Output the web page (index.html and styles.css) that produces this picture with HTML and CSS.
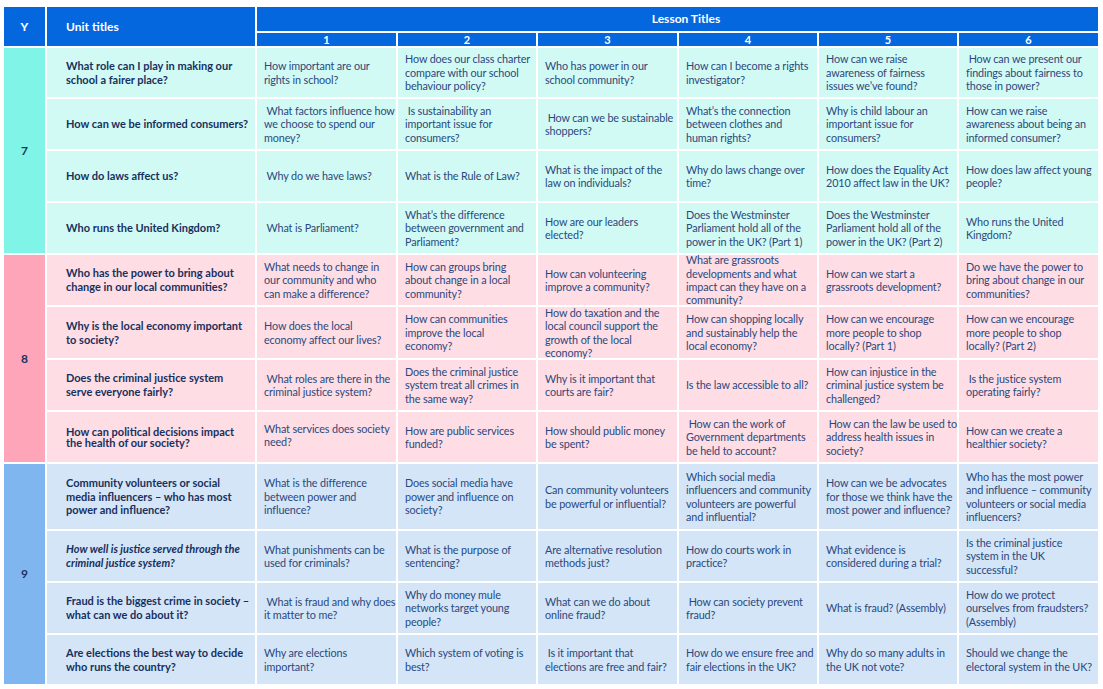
FILE: index.html
```html
<!DOCTYPE html>
<html lang="en">
<head>
<meta charset="utf-8">
<title>Curriculum overview</title>
<link rel="stylesheet" href="styles.css">
</head>
<body>
<div class="grid">
  <div class="hd hd-y"><span>Y</span></div>
  <div class="hd hd-unit"><span>Unit titles</span></div>
  <div class="hd hd-lessons"><span>Lesson Titles</span></div>
  <div class="hd num"><span>1</span></div>
  <div class="hd num"><span>2</span></div>
  <div class="hd num"><span>3</span></div>
  <div class="hd num"><span>4</span></div>
  <div class="hd num"><span>5</span></div>
  <div class="hd num"><span>6</span></div>

  <!-- Year 7 -->
  <div class="yr y7"><span>7</span></div>
  <div class="unit y7r"><span>What role can I play in making our<br>school a fairer place?</span></div>
  <div class="c y7r"><span>How important are our<br>rights in school?</span></div>
  <div class="c y7r"><span>How does our class charter<br>compare with our school<br>behaviour policy?</span></div>
  <div class="c y7r"><span>Who has power in our<br>school community?</span></div>
  <div class="c y7r"><span>How can I become a rights<br>investigator?</span></div>
  <div class="c y7r"><span>How can we raise<br>awareness of fairness<br>issues we’ve found?</span></div>
  <div class="c y7r"><span>&nbsp;How can we present our<br>findings about fairness to<br>those in power?</span></div>

  <div class="unit y7r"><span>How can we be informed consumers?</span></div>
  <div class="c y7r"><span>&nbsp;What factors influence how<br>we choose to spend our<br>money?</span></div>
  <div class="c y7r"><span>&nbsp;Is sustainability an<br>important issue for<br>consumers?</span></div>
  <div class="c y7r"><span>&nbsp;How can we be sustainable<br>shoppers?</span></div>
  <div class="c y7r"><span>What’s the connection<br>between clothes and<br>human rights?</span></div>
  <div class="c y7r"><span>Why is child labour an<br>important issue for<br>consumers?</span></div>
  <div class="c y7r"><span>How can we raise<br>awareness about being an<br>informed consumer?</span></div>

  <div class="unit y7r"><span>How do laws affect us?</span></div>
  <div class="c y7r"><span>&nbsp;Why do we have laws?</span></div>
  <div class="c y7r"><span>What is the Rule of Law?</span></div>
  <div class="c y7r"><span>What is the impact of the<br>law on individuals?</span></div>
  <div class="c y7r"><span>Why do laws change over<br>time?</span></div>
  <div class="c y7r"><span>How does the Equality Act<br>2010 affect law in the UK?</span></div>
  <div class="c y7r"><span>How does law affect young<br>people?</span></div>

  <div class="unit y7r"><span>Who runs the United Kingdom?</span></div>
  <div class="c y7r"><span>&nbsp;What is Parliament?</span></div>
  <div class="c y7r"><span>What’s the difference<br>between government and<br>Parliament?</span></div>
  <div class="c y7r"><span>How are our leaders<br>elected?</span></div>
  <div class="c y7r"><span>Does the Westminster<br>Parliament hold all of the<br>power in the UK? (Part 1)</span></div>
  <div class="c y7r"><span>Does the Westminster<br>Parliament hold all of the<br>power in the UK? (Part 2)</span></div>
  <div class="c y7r"><span>Who runs the United<br>Kingdom?</span></div>

  <!-- Year 8 -->
  <div class="yr y8"><span>8</span></div>
  <div class="unit y8r"><span>Who has the power to bring about<br>change in our local communities?</span></div>
  <div class="c y8r"><span>What needs to change in<br>our community and who<br>can make a difference?</span></div>
  <div class="c y8r"><span>How can groups bring<br>about change in a local<br>community?</span></div>
  <div class="c y8r"><span>How can volunteering<br>improve a community?</span></div>
  <div class="c y8r"><span>What are grassroots<br>developments and what<br>impact can they have on a<br>community?</span></div>
  <div class="c y8r"><span>How can we start a<br>grassroots development?</span></div>
  <div class="c y8r"><span>Do we have the power to<br>bring about change in our<br>communities?</span></div>

  <div class="unit y8r"><span>Why is the local economy important<br>to society?</span></div>
  <div class="c y8r"><span>How does the local<br>economy affect our lives?</span></div>
  <div class="c y8r"><span>How can communities<br>improve the local<br>economy?</span></div>
  <div class="c y8r"><span>How do taxation and the<br>local council support the<br>growth of the local<br>economy?</span></div>
  <div class="c y8r"><span>How can shopping locally<br>and sustainably help the<br>local economy?</span></div>
  <div class="c y8r"><span>How can we encourage<br>more people to shop<br>locally? (Part 1)</span></div>
  <div class="c y8r"><span>How can we encourage<br>more people to shop<br>locally? (Part 2)</span></div>

  <div class="unit y8r"><span>Does the criminal justice system<br>serve everyone fairly?</span></div>
  <div class="c y8r"><span>&nbsp;What roles are there in the<br>criminal justice system?</span></div>
  <div class="c y8r"><span>Does the criminal justice<br>system treat all crimes in<br>the same way?</span></div>
  <div class="c y8r"><span>Why is it important that<br>courts are fair?</span></div>
  <div class="c y8r"><span>Is the law accessible to all?</span></div>
  <div class="c y8r"><span>How can injustice in the<br>criminal justice system be<br>challenged?</span></div>
  <div class="c y8r"><span>&nbsp;Is the justice system<br>operating fairly?</span></div>

  <div class="unit y8r tight"><span>How can political decisions impact<br>the health of our society?</span></div>
  <div class="c y8r up"><span>What services does society<br>need?</span></div>
  <div class="c y8r"><span>How are public services<br>funded?</span></div>
  <div class="c y8r"><span>How should public money<br>be spent?</span></div>
  <div class="c y8r"><span>&nbsp;How can the work of<br>Government departments<br>be held to account?</span></div>
  <div class="c y8r"><span>&nbsp;How can the law be used to<br>address health issues in<br>society?</span></div>
  <div class="c y8r"><span>How can we create a<br>healthier society?</span></div>

  <!-- Year 9 -->
  <div class="yr y9"><span>9</span></div>
  <div class="unit y9r"><span>Community volunteers or social<br>media influencers – who has most<br>power and influence?</span></div>
  <div class="c y9r"><span>What is the difference<br>between power and<br>influence?</span></div>
  <div class="c y9r"><span>Does social media have<br>power and influence on<br>society?</span></div>
  <div class="c y9r"><span>Can community volunteers<br>be powerful or influential?</span></div>
  <div class="c y9r"><span>Which social media<br>influencers and community<br>volunteers are powerful<br>and influential?</span></div>
  <div class="c y9r"><span>How can we be advocates<br>for those we think have the<br>most power and influence?</span></div>
  <div class="c y9r"><span>Who has the most power<br>and influence – community<br>volunteers or social media<br>influencers?</span></div>

  <div class="unit y9r it"><span>How well is justice served through the<br>criminal justice system?</span></div>
  <div class="c y9r"><span>What punishments can be<br>used for criminals?</span></div>
  <div class="c y9r"><span>What is the purpose of<br>sentencing?</span></div>
  <div class="c y9r"><span>Are alternative resolution<br>methods just?</span></div>
  <div class="c y9r"><span>How do courts work in<br>practice?</span></div>
  <div class="c y9r"><span>What evidence is<br>considered during a trial?</span></div>
  <div class="c y9r"><span>Is the criminal justice<br>system in the UK<br>successful?</span></div>

  <div class="unit y9r"><span>Fraud is the biggest crime in society –<br>what can we do about it?</span></div>
  <div class="c y9r"><span>&nbsp;What is fraud and why does<br>it matter to me?</span></div>
  <div class="c y9r"><span>Why do money mule<br>networks target young<br>people?</span></div>
  <div class="c y9r"><span>What can we do about<br>online fraud?</span></div>
  <div class="c y9r"><span>&nbsp;How can society prevent<br>fraud?</span></div>
  <div class="c y9r"><span>What is fraud? (Assembly)</span></div>
  <div class="c y9r"><span>How do we protect<br>ourselves from fraudsters?<br>(Assembly)</span></div>

  <div class="unit y9r"><span>Are elections the best way to decide<br>who runs the country?</span></div>
  <div class="c y9r"><span>Why are elections<br>important?</span></div>
  <div class="c y9r"><span>Which system of voting is<br>best?</span></div>
  <div class="c y9r"><span>&nbsp;Is it important that<br>elections are free and fair?</span></div>
  <div class="c y9r"><span>How do we ensure free and<br>fair elections in the UK?</span></div>
  <div class="c y9r"><span>Why do so many adults in<br>the UK not vote?</span></div>
  <div class="c y9r"><span>Should we change the<br>electoral system in the UK?</span></div>
</div>
</body>
</html>
```

FILE: styles.css
```css
html, body {
  margin: 0;
  padding: 0;
  background: #ffffff;
}

body {
  font-family: Lato, "Liberation Sans", sans-serif;
  font-size: 11px;
  line-height: 13.4px;
  color: #2a487c;
}

.grid {
  display: grid;
  grid-template-columns: 41px 208px 139px 138px 139px 138px 138px 139px;
  grid-template-rows: 24px 13px 49px 50px 50px 50px 50px 51px 50px 50px 65px 50px 50px 49px;
  gap: 2px;
  margin: 7px 0 0 4px;
  width: 1094px;
}

.grid > div {
  display: flex;
  align-items: center;
  min-width: 0;
  white-space: nowrap;
}

.hd {
  background: #0567dd;
  color: #ffffff;
  font-weight: 700;
}

.hd-y {
  grid-row: span 2;
  justify-content: center;
  font-size: 12px;
}

.hd-unit {
  grid-row: span 2;
  padding-left: 19px;
  font-size: 12px;
}

.hd-lessons {
  grid-column: span 6;
  justify-content: center;
  font-size: 12px;
  padding-left: 17px;
}

.num {
  justify-content: center;
  font-size: 11px;
  line-height: 13px;
}

.yr {
  grid-row: span 4;
  justify-content: center;
  font-weight: 700;
  font-size: 12px;
  color: #1b335f;
}

.y7 { background: #80f4e6; }
.y8 { background: #ffa5b9; }
.y9 { background: #80b6ef; }

.y7r { background: #d2faf5; }
.y8r { background: #ffdde4; }
.y9r { background: #d4e5f8; }

.unit {
  padding-left: 19px;
  font-weight: 700;
  color: #17305d;
  line-height: 13.6px;
}

.unit.it {
  font-style: italic;
}

.unit.tight {
  line-height: 11.5px;
}

.c {
  padding: 0 2px 0 7px;
  font-size: 10.8px;
  letter-spacing: -0.12px;
}

.c.up span {
  margin-bottom: 4px;
}
```
